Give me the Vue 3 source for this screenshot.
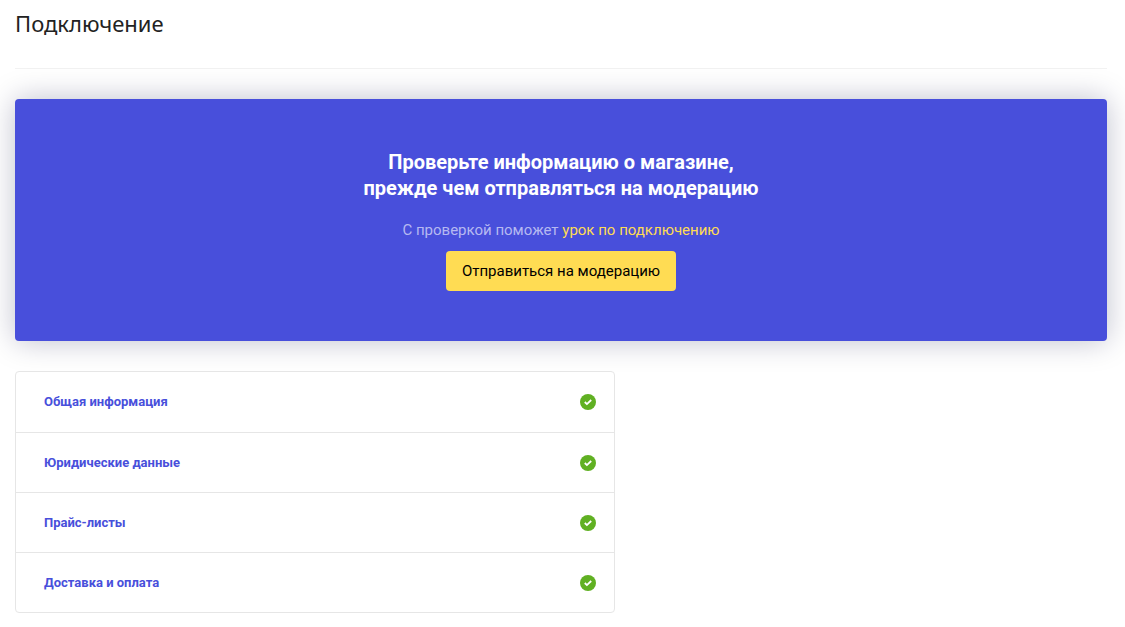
<script setup>
const steps = ['Общая информация', 'Юридические данные', 'Прайс-листы', 'Доставка и оплата']
</script>

<template>
  <main class="page">
    <h1 class="title">Подключение</h1>
    <section class="banner">
      <h2 class="heading">Проверьте информацию о магазине,<br />прежде чем отправляться на модерацию</h2>
      <p class="hint">С проверкой поможет <a href="#lesson">урок по подключению</a></p>
      <button class="submit" type="button">Отправиться на модерацию</button>
    </section>
    <ul class="steps">
      <li v-for="step in steps" :key="step" class="step">
        <a href="#step">{{ step }}</a>
        <svg class="check" viewBox="0 0 16 16" aria-hidden="true">
          <circle cx="8" cy="8" r="8" fill="#60b022" />
          <path d="M4.8 8l2.1 2.1L11.2 6" fill="none" stroke="#fff" stroke-width="1.8" />
        </svg>
      </li>
    </ul>
  </main>
</template>

<style>
body {
  margin: 0;
  background: #fff;
}
</style>

<style scoped>
.page {
  padding: 8px 18px 14px 15px;
  font-family: Roboto, "Noto Sans", sans-serif;
  color: #222;
}
.title {
  margin: 0 0 30px;
  padding-bottom: 30px;
  border-bottom: 1px solid #f2f2f2;
  font-family: "Noto Sans", "Open Sans", sans-serif;
  font-size: 22px;
  line-height: 30px;
  font-weight: 400;
}
.banner {
  display: flex;
  flex-direction: column;
  align-items: center;
  padding: 50px 16px;
  border-radius: 4px;
  background: #484fdb;
  box-shadow: 0 0 30px rgba(0, 10, 60, 0.26);
  text-align: center;
}
.heading {
  margin: 0 0 16px;
  color: #fff;
  font-size: 20px;
  line-height: 26px;
  font-weight: 700;
}
.hint {
  margin: 0 0 8px;
  color: #b6b9f1;
  font-size: 15px;
  line-height: 26px;
}
.hint a {
  color: #ffdc53;
  text-decoration: none;
}
.submit {
  height: 40px;
  padding: 0 16px;
  border: 0;
  border-radius: 4px;
  background: #ffdc53;
  color: #000;
  font: inherit;
  font-size: 15px;
}
.steps {
  max-width: 598px;
  margin: 30px 0 0;
  padding: 0;
  border: 1px solid #e6e6e6;
  border-radius: 4px;
  list-style: none;
}
.step {
  display: flex;
  box-sizing: border-box;
  align-items: center;
  justify-content: space-between;
  height: 60px;
  padding: 0 18px 0 28px;
}
.step + .step {
  border-top: 1px solid #e6e6e6;
}
.step a {
  color: #484fdb;
  font-size: 13px;
  line-height: 20px;
  font-weight: 700;
  text-decoration: none;
}
.check {
  width: 16px;
  height: 16px;
}
</style>
